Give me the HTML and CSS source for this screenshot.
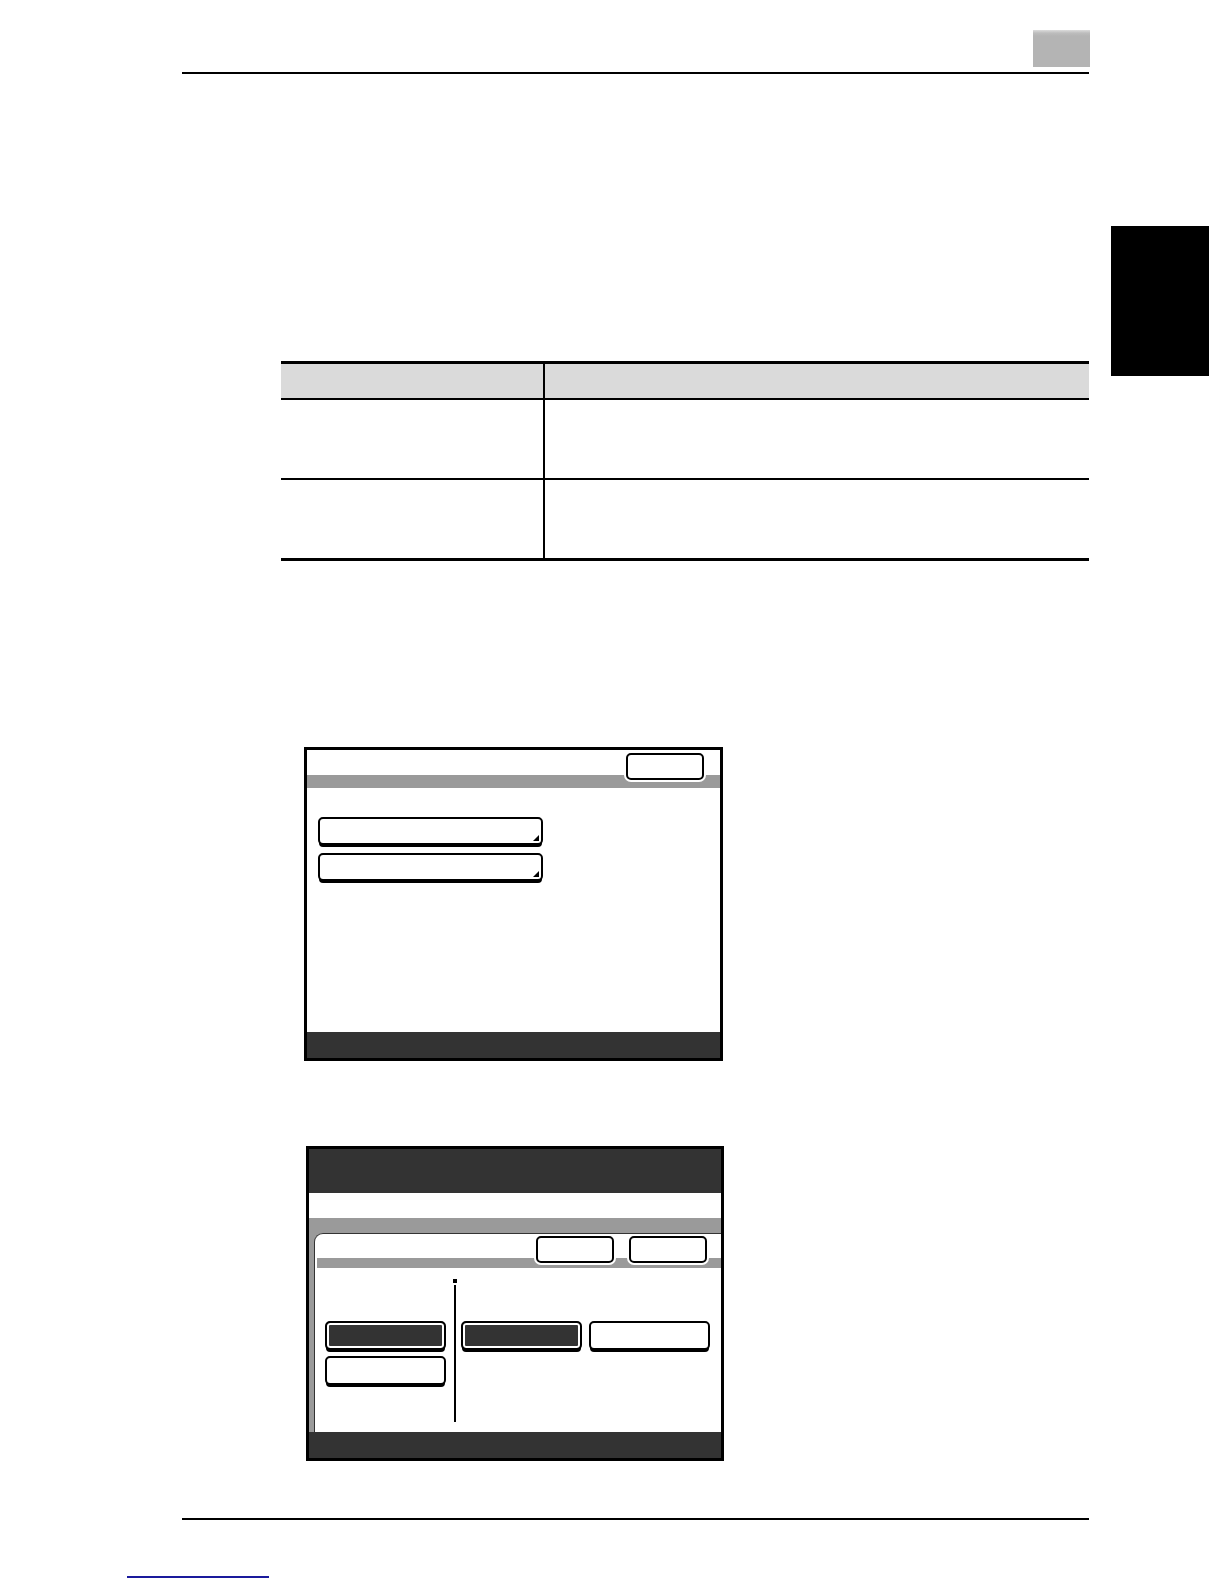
FILE: index.html
```html
<!DOCTYPE html>
<html lang="en">
<head>
<meta charset="utf-8">
<title>Manual page</title>
<link rel="stylesheet" href="styles.css">
</head>
<body>
<div class="page">
  <header class="page-header">
    <div class="chapter-box"></div>
  </header>
  <div class="thumb-tab"></div>

  <div class="spec-table">
    <div class="cell head first"></div>
    <div class="cell head"></div>
    <div class="cell row first"></div>
    <div class="cell row"></div>
    <div class="cell row last first"></div>
    <div class="cell row last"></div>
  </div>

  <div class="screen screen-one">
    <div class="s1-head">
      <div class="s1-graybar"></div>
      <div class="key key-top"></div>
    </div>
    <div class="s1-content">
      <div class="key key-menu"></div>
      <div class="key key-menu"></div>
    </div>
    <div class="status-bar"></div>
  </div>

  <div class="screen screen-two">
    <div class="s2-title"></div>
    <div class="s2-sub"></div>
    <div class="s2-body">
      <div class="panel">
        <div class="panel-head">
          <div class="panel-graybar"></div>
          <div class="panel-keys">
            <div class="key key-small"></div>
            <div class="key key-small"></div>
          </div>
        </div>
        <div class="panel-content">
          <div class="left-col">
            <div class="key key-opt selected"></div>
            <div class="key key-opt"></div>
          </div>
          <div class="divider"></div>
          <div class="right-col">
            <div class="key key-opt selected"></div>
            <div class="key key-opt"></div>
          </div>
        </div>
      </div>
    </div>
    <div class="status-bar"></div>
  </div>

  <footer class="page-footer"></footer>
  <div class="link-line"></div>
</div>
</body>
</html>
```

FILE: styles.css
```css
html, body {
  margin: 0;
  padding: 0;
  background: #ffffff;
  font-family: "Liberation Sans", Arial, sans-serif;
}

.page {
  position: relative;
  width: 1224px;
  height: 1584px;
  overflow: hidden;
}

/* header */
.page-header {
  margin-left: 182px;
  width: 907px;
  height: 72px;
  border-bottom: 2px solid #000;
  display: flex;
  justify-content: flex-end;
  align-items: flex-end;
}
.chapter-box {
  width: 57px;
  height: 37px;
  margin-bottom: 5px;
  margin-right: -1px;
  background: linear-gradient(#dcdcdc 0, #bdbdbd 3px, #b4b4b4 6px, #b4b4b4 100%);
}

.thumb-tab {
  position: absolute;
  left: 1111px;
  top: 226px;
  width: 98px;
  height: 150px;
  background: #000;
}

/* table */
.spec-table {
  margin: 287px 0 0 281px;
  width: 808px;
  display: grid;
  grid-template-columns: 264px 1fr;
  grid-template-rows: 36px 80px 78px;
  border-top: 3px solid #000;
  border-bottom: 3px solid #000;
}
.cell.first {
  border-right: 2px solid #000;
}
.cell.head {
  background: #dadada;
  border-bottom: 2px solid #000;
}
.cell.row {
  border-bottom: 2px solid #000;
}
.cell.row.last {
  border-bottom: none;
}

/* screens */
.screen {
  box-sizing: border-box;
  border: 3px solid #000;
  display: flex;
  flex-direction: column;
  background: #fff;
}
.screen-one {
  margin: 186px 0 0 304px;
  width: 419px;
  height: 314px;
}
.screen-two {
  margin: 85px 0 0 306px;
  width: 418px;
  height: 315px;
}
.status-bar {
  height: 26px;
  background: #333333;
  flex: none;
}

/* generic key */
.key {
  box-sizing: border-box;
  border: 2px solid #000;
  border-radius: 5px;
  background: #fff;
  position: relative;
}

/* screen one */
.s1-head {
  display: grid;
  grid-template-columns: 1fr auto;
  grid-template-rows: 25px 13px;
}
.s1-graybar {
  grid-row: 2;
  grid-column: 1 / -1;
  background: #9a9a9a;
}
.key-top {
  grid-row: 1 / 3;
  grid-column: 2;
  align-self: start;
  width: 78px;
  height: 27px;
  margin: 3px 16px 0 0;
  box-shadow: 0 0 0 2px #fff;
  z-index: 1;
}
.s1-content {
  flex: 1;
  padding: 29px 0 0 11px;
  display: flex;
  flex-direction: column;
  gap: 8px;
}
.key-menu {
  width: 225px;
  height: 28px;
  box-shadow: 0 3px 0 -1px #000;
}
.key-menu::after {
  content: "";
  position: absolute;
  right: 2px;
  bottom: 2px;
  border-style: solid;
  border-width: 0 0 6px 6px;
  border-color: transparent transparent #000 transparent;
}

/* screen two */
.s2-title {
  height: 44px;
  background: #333333;
  flex: none;
}
.s2-sub {
  height: 25px;
  flex: none;
}
.s2-body {
  flex: 1;
  background: #9a9a9a;
  padding: 15px 0 0 5px;
  display: flex;
}
.panel {
  flex: 1;
  background: #fff;
  border-top: 1px solid #333;
  border-left: 1px solid #333;
  border-top-left-radius: 9px;
  display: flex;
  flex-direction: column;
}
.panel-head {
  display: grid;
  grid-template-columns: 1fr auto;
  grid-template-rows: 24px 10px;
  padding-left: 2px;
}
.panel-graybar {
  grid-row: 2;
  grid-column: 1 / -1;
  background: #9a9a9a;
}
.panel-keys {
  grid-row: 1 / 3;
  grid-column: 2;
  align-self: start;
  display: flex;
  gap: 15px;
  margin: 2px 14px 0 0;
  z-index: 1;
}
.key-small {
  width: 78px;
  height: 27px;
  box-shadow: 0 0 0 2px #fff;
}
.panel-content {
  flex: 1;
  display: flex;
  padding-top: 11px;
}
.left-col {
  width: 121px;
  padding: 42px 8px 0 10px;
  display: flex;
  flex-direction: column;
  gap: 6px;
}
.divider {
  width: 2px;
  height: 143px;
  background: #000;
  position: relative;
}
.divider::before {
  content: "";
  position: absolute;
  left: -1px;
  top: 0;
  width: 4px;
  height: 4px;
  background: #000;
}
.divider::after {
  content: "";
  position: absolute;
  left: 0;
  top: 4px;
  width: 2px;
  height: 2px;
  background: #fff;
}
.right-col {
  padding: 42px 0 0 5px;
  display: flex;
  gap: 7px;
  align-items: flex-start;
}
.key-opt {
  width: 121px;
  height: 29px;
  box-shadow: 0 3px 0 -1px #000;
}
.key-opt.selected {
  background: #333333;
  box-shadow: inset 0 0 0 2px #fff, 0 3px 0 -1px #000;
}

/* footer */
.page-footer {
  margin: 57px 0 0 182px;
  width: 907px;
  height: 2px;
  background: #000;
}
.link-line {
  margin: 56px 0 0 127px;
  width: 142px;
  height: 2px;
  background: #1a1a9c;
}
```
